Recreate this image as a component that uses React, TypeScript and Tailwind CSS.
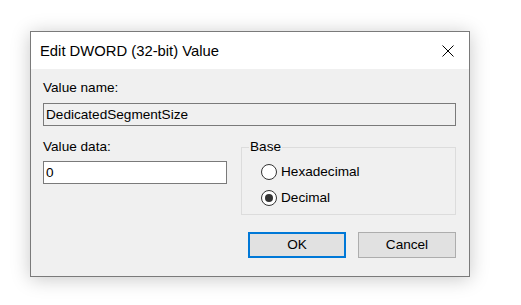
import { useState } from "react";

export default function App() {
  const [base, setBase] = useState<"hex" | "dec">("dec");

  const Radio = ({ value, label }: { value: "hex" | "dec"; label: string }) => (
    <label className="flex items-center gap-[4px] h-[18px] cursor-default" onClick={() => setBase(value)}>
      <span className="w-[16px] h-[16px] rounded-full border border-[#333333] bg-white flex items-center justify-center">
        {base === value && <span className="w-[8px] h-[8px] rounded-full bg-[#333333]"></span>}
      </span>
      <span>{label}</span>
    </label>
  );

  return (
    <div className="min-h-[305px] bg-white pl-[30px] pt-[31px] text-black font-['Liberation_Sans',Arial,sans-serif]">
      <div className="w-[440px] h-[246px] flex flex-col border border-[#7a7a7a] shadow-[0_2px_18px_rgba(0,0,0,0.22)]">
        {/* Title bar */}
        <div className="h-[37px] bg-white flex items-center justify-between pl-[9px] pr-[15px]">
          <span className="text-[14.8px] leading-[18px]">Edit DWORD (32-bit) Value</span>
          <svg width="12" height="12" viewBox="0 0 12 12" className="block">
            <path d="M0.5 0.5 L11.5 11.5 M11.5 0.5 L0.5 11.5" stroke="#000" strokeWidth="1" fill="none" />
          </svg>
        </div>

        {/* Body */}
        <div className="flex-1 bg-[#f0f0f0] pl-[12px] pr-[13px] pt-[11px] text-[13.6px] leading-[16px]">
          <div>Value name:</div>
          <input
            readOnly
            value="DedicatedSegmentSize"
            className="mt-[7px] block w-full h-[23px] border border-[#7a7a7a] bg-[#f0f0f0] px-[2px] text-[13.6px] font-['Liberation_Sans',Arial,sans-serif] outline-none"
          />

          <div className="mt-[13px] flex gap-[14px]">
            <div className="w-[184px]">
              <div>Value data:</div>
              <input
                readOnly
                value="0"
                className="mt-[6px] block w-full h-[23px] border border-[#7a7a7a] bg-white px-[2px] text-[13.6px] font-['Liberation_Sans',Arial,sans-serif] outline-none"
              />
            </div>
            <fieldset className="w-[215px] border border-[#dcdcdc] p-0 m-0">
              <legend className="ml-[7px] px-[1px] leading-[16px]">Base</legend>
              <div className="pl-[19px] pt-[8px] pb-[7px] flex flex-col gap-[8px]">
                <Radio value="hex" label="Hexadecimal" />
                <Radio value="dec" label="Decimal" />
              </div>
            </fieldset>
          </div>

          <div className="mt-[17px] flex justify-end gap-[12px]">
            <button className="w-[98px] h-[26px] border-2 border-[#0078d7] bg-[#e1e1e1] text-[13.6px] font-['Liberation_Sans',Arial,sans-serif]">
              OK
            </button>
            <button className="w-[98px] h-[26px] border border-[#adadad] bg-[#e1e1e1] text-[13.6px] font-['Liberation_Sans',Arial,sans-serif]">
              Cancel
            </button>
          </div>
        </div>
      </div>
    </div>
  );
}
